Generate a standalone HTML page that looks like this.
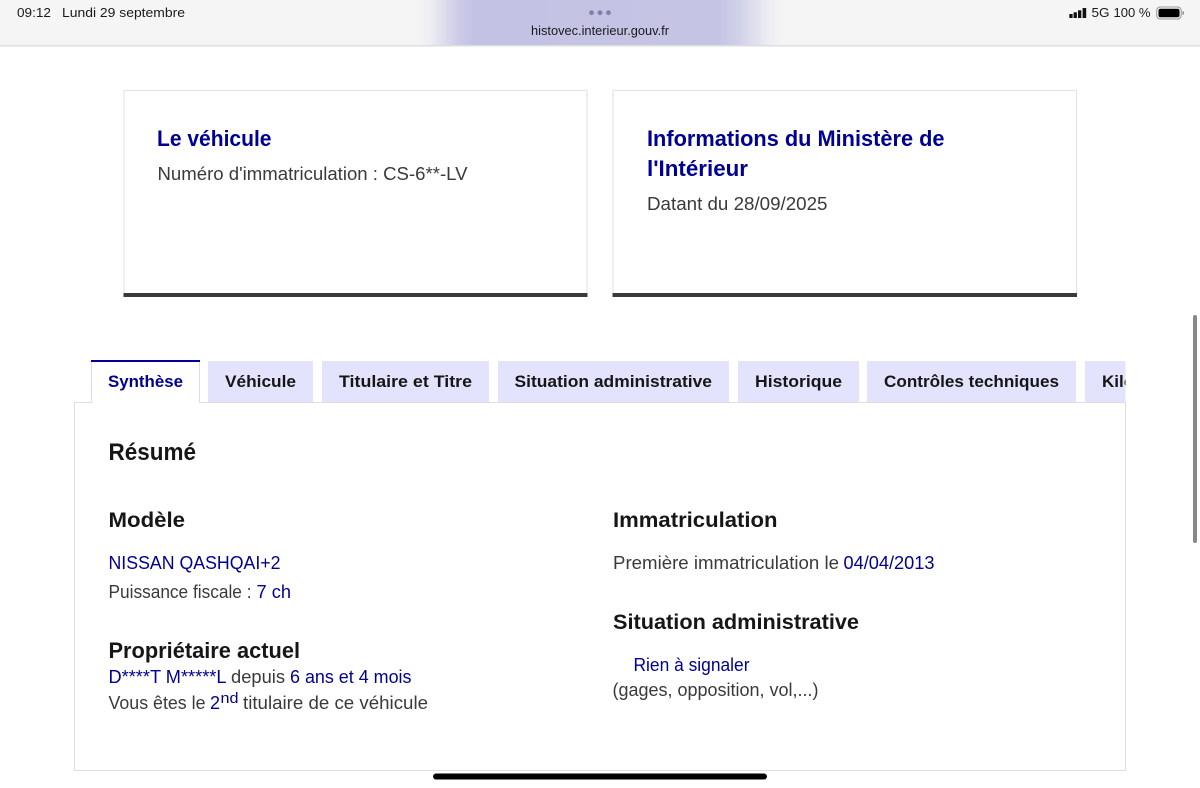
<!DOCTYPE html>
<html lang="fr"><head><meta charset="utf-8"><title>Histovec</title>
<style>
html,body{margin:0;padding:0;width:1200px;height:788px;overflow:hidden;background:#fff}
svg{display:block}
text{font-family:"Liberation Sans",sans-serif;white-space:pre}
.h{font-weight:700;fill:#161616}
.b{font-size:18px;fill:#3a3a3a}
.l{fill:#000091}
.t{font-weight:700;font-size:17px;fill:#161616}
.c{font-weight:700;font-size:22px;fill:#000091}
.s{font-size:13px;fill:#1a1a1a}
</style></head><body>
<svg width="1200" height="788" viewBox="0 0 1200 788" xmlns="http://www.w3.org/2000/svg">
<defs>
<linearGradient id="g" x1="0" x2="1" y1="0" y2="0">
<stop offset="0" stop-color="#f5f5f5"/><stop offset=".04" stop-color="#eeeef3"/><stop offset=".08" stop-color="#dcdcec"/><stop offset=".12" stop-color="#cbcae7"/><stop offset=".16" stop-color="#c4c2e4"/><stop offset=".82" stop-color="#c5c4e5"/><stop offset=".87" stop-color="#cfcfe9"/><stop offset=".92" stop-color="#e0e0ee"/><stop offset=".96" stop-color="#eeeef3"/><stop offset="1" stop-color="#f5f5f5"/>
</linearGradient>
<clipPath id="cl"><rect x="0" y="350" width="1125.5" height="60"/></clipPath>
</defs>
<rect width="1200" height="788" fill="#fff"/>
<rect width="1200" height="45" fill="#f5f5f5"/>
<rect x="415" width="370" height="45" fill="url(#g)"/>
<rect y="45" width="1200" height="1.5" fill="#dedede"/>
<text class="s" x="17" y="17" textLength="34" lengthAdjust="spacingAndGlyphs">09:12</text>
<text class="s" x="62" y="17" textLength="123" lengthAdjust="spacingAndGlyphs">Lundi 29 septembre</text>
<circle cx="591.500" cy="12.700" r="2.400" fill="#8280ab"/><circle cx="600" cy="12.700" r="2.400" fill="#8280ab"/><circle cx="608.500" cy="12.700" r="2.400" fill="#8280ab"/>
<text class="s" x="531" y="35" textLength="138" lengthAdjust="spacingAndGlyphs">histovec.interieur.gouv.fr</text>
<rect x="1069.300" y="14" width="3.300" height="4" fill="#111"/><rect x="1073.600" y="12.300" width="3.300" height="5.700" fill="#111"/><rect x="1078" y="10.300" width="3.300" height="7.700" fill="#111"/><rect x="1082.600" y="8" width="3.600" height="10" fill="#111"/>
<text class="s" x="1091.500" y="17" textLength="18" lengthAdjust="spacingAndGlyphs">5G</text>
<text class="s" x="1113.500" y="17" textLength="37" lengthAdjust="spacingAndGlyphs">100 %</text>
<rect x="1156.700" y="7" width="24.500" height="12" rx="3.500" fill="#f5f5f5" stroke="#999" stroke-width="1"/>
<rect x="1158.500" y="8.800" width="21" height="8.400" rx="2" fill="#000"/>
<path d="M1182.500 11v4a2 2 0 0 0 1.500-2a2 2 0 0 0-1.500-2z" fill="#888"/>

<!-- cards -->
<rect x="124" y="90.500" width="463" height="205" fill="#fff" stroke="#e2e2e2"/>
<rect x="123.500" y="293" width="464" height="4" fill="#3a3a3a"/>
<rect x="613" y="90.500" width="463.500" height="205" fill="#fff" stroke="#e2e2e2"/>
<rect x="612.500" y="293" width="464.500" height="4" fill="#3a3a3a"/>
<text class="c" x="157" y="146" textLength="114.500" lengthAdjust="spacingAndGlyphs">Le véhicule</text>
<text class="b" x="157.500" y="180" textLength="310" lengthAdjust="spacingAndGlyphs">Numéro d'immatriculation : CS-6**-LV</text>
<text class="c" x="647" y="146" textLength="297.500" lengthAdjust="spacingAndGlyphs">Informations du Ministère de</text>
<text class="c" x="647" y="176" textLength="101" lengthAdjust="spacingAndGlyphs">l'Intérieur</text>
<text class="b" x="647" y="210" textLength="180.500" lengthAdjust="spacingAndGlyphs">Datant du 28/09/2025</text>

<!-- panel -->
<rect x="74.500" y="402.500" width="1051" height="368" fill="#fff" stroke="#dedede"/>
<g clip-path="url(#cl)">
<rect x="91" y="361" width="108.500" height="42" fill="#fff"/>
<path d="M91.500 362V403M199.500 362V403" stroke="#dedede" fill="none"/>
<rect x="91" y="360" width="109" height="2" fill="#000091"/>
<rect x="208" y="361" width="105" height="41" fill="#e3e3fd"/>
<rect x="322" y="361" width="167" height="41" fill="#e3e3fd"/>
<rect x="498" y="361" width="231" height="41" fill="#e3e3fd"/>
<rect x="738" y="361" width="121" height="41" fill="#e3e3fd"/>
<rect x="867" y="361" width="209" height="41" fill="#e3e3fd"/>
<rect x="1085" y="361" width="41" height="41" fill="#e3e3fd"/>
<text class="t" x="108" y="387" style="fill:#000091" textLength="75" lengthAdjust="spacingAndGlyphs">Synthèse</text>
<text class="t" x="225" y="387" textLength="71" lengthAdjust="spacingAndGlyphs">Véhicule</text>
<text class="t" x="339" y="387" textLength="133" lengthAdjust="spacingAndGlyphs">Titulaire et Titre</text>
<text class="t" x="514.500" y="387" textLength="197.500" lengthAdjust="spacingAndGlyphs">Situation administrative</text>
<text class="t" x="755" y="387" textLength="87" lengthAdjust="spacingAndGlyphs">Historique</text>
<text class="t" x="884" y="387" textLength="175" lengthAdjust="spacingAndGlyphs">Contrôles techniques</text>
<text class="t" x="1102" y="387">Kilométrage</text>
</g>

<!-- content -->
<text class="h" font-size="24" x="108.500" y="460" textLength="87.500" lengthAdjust="spacingAndGlyphs">Résumé</text>
<text class="h" font-size="21" x="108.500" y="527" textLength="76.500" lengthAdjust="spacingAndGlyphs">Modèle</text>
<text class="h" font-size="21" x="613" y="527" textLength="164.500" lengthAdjust="spacingAndGlyphs">Immatriculation</text>
<text class="b l" x="108.500" y="569" textLength="172" lengthAdjust="spacingAndGlyphs">NISSAN QASHQAI+2</text>
<text class="b" x="108.500" y="598" textLength="143" lengthAdjust="spacingAndGlyphs">Puissance fiscale :</text>
<text class="b l" x="256.500" y="598" textLength="34.500" lengthAdjust="spacingAndGlyphs">7 ch</text>
<text class="b" x="613" y="569" textLength="226" lengthAdjust="spacingAndGlyphs">Première immatriculation le</text>
<text class="b l" x="843.500" y="569" textLength="91" lengthAdjust="spacingAndGlyphs">04/04/2013</text>
<text class="h" font-size="21" x="613" y="629" textLength="246" lengthAdjust="spacingAndGlyphs">Situation administrative</text>
<text class="b l" x="633.500" y="671" textLength="116" lengthAdjust="spacingAndGlyphs">Rien à signaler</text>
<text class="b" x="612.500" y="696" textLength="206" lengthAdjust="spacingAndGlyphs">(gages, opposition, vol,...)</text>
<text class="h" font-size="22" x="108.500" y="658" textLength="191.500" lengthAdjust="spacingAndGlyphs">Propriétaire actuel</text>
<text class="b l" x="108.500" y="683" textLength="118" lengthAdjust="spacingAndGlyphs">D****T M*****L</text>
<text class="b" x="231" y="683" textLength="54" lengthAdjust="spacingAndGlyphs">depuis</text>
<text class="b l" x="290" y="683" textLength="121.500" lengthAdjust="spacingAndGlyphs">6 ans et 4 mois</text>
<text class="b" x="108.500" y="709" textLength="97" lengthAdjust="spacingAndGlyphs">Vous êtes le</text>
<text class="b l" x="210" y="709">2</text>
<text class="l" font-size="15" x="220.500" y="703" textLength="18" lengthAdjust="spacingAndGlyphs">nd</text>
<text class="b" x="243" y="709" textLength="185" lengthAdjust="spacingAndGlyphs">titulaire de ce véhicule</text>

<rect x="1193" y="315" width="4" height="228" rx="2" fill="#888"/>
<rect x="433" y="773.500" width="334" height="6" rx="3" fill="#000"/>
</svg>
</body></html>
